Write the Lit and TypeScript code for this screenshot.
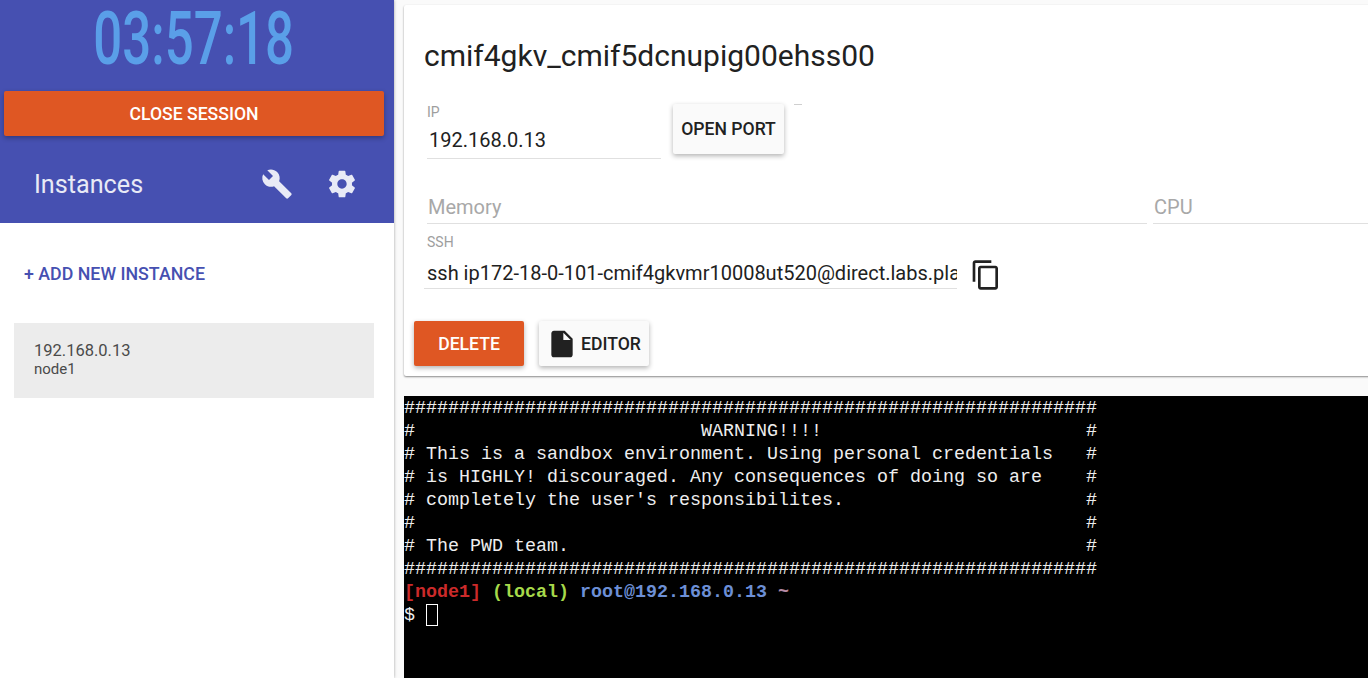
import { LitElement, html, css, svg } from "lit";
import { customElement } from "lit/decorators.js";

const ICONS = {
  build: "M22.7 19l-9.1-9.1c.9-2.3.4-5-1.5-6.9-2-2-5-2.4-7.4-1.3L9 6 6 9 1.6 4.7C.4 7.1.9 10.1 2.9 12.1c1.9 1.9 4.6 2.4 6.9 1.5l9.1 9.1c.4.4 1 .4 1.4 0l2.3-2.3c.5-.4.5-1.1.1-1.4z",
  gear: "M19.43 12.98c.04-.32.07-.64.07-.98s-.03-.66-.07-.98l2.11-1.65c.19-.15.24-.42.12-.64l-2-3.46c-.12-.22-.39-.3-.61-.22l-2.49 1c-.52-.4-1.08-.73-1.69-.98l-.38-2.65C14.46 2.18 14.25 2 14 2h-4c-.25 0-.46.18-.49.42l-.38 2.65c-.61.25-1.17.59-1.69.98l-2.49-1c-.23-.09-.49 0-.61.22l-2 3.46c-.13.22-.07.49.12.64l2.11 1.65c-.04.32-.07.65-.07.98s.03.66.07.98l-2.11 1.65c-.19.15-.24.42-.12.64l2 3.46c.12.22.39.3.61.22l2.49-1c.52.4 1.08.73 1.69.98l.38 2.65c.03.24.24.42.49.42h4c.25 0 .46-.18.49-.42l.38-2.65c.61-.25 1.17-.59 1.69-.98l2.49 1c.23.09.49 0 .61-.22l2-3.46c.12-.22.07-.49-.12-.64l-2.11-1.65zM12 15.5c-1.93 0-3.5-1.57-3.5-3.5s1.57-3.5 3.5-3.5 3.5 1.57 3.5 3.5-1.57 3.5-3.5 3.5z",
  copy: "M16 1H4c-1.1 0-2 .9-2 2v14h2V3h12V1zm3 4H8c-1.1 0-2 .9-2 2v14c0 1.1.9 2 2 2h11c1.1 0 2-.9 2-2V7c0-1.1-.9-2-2-2zm0 16H8V7h11v14z",
  file: "M6 2c-1.1 0-1.99.9-1.99 2L4 20c0 1.1.89 2 1.99 2H18c1.1 0 2-.9 2-2V8l-6-6H6zm7 7V3.5L18.5 9H13z",
};
const icon = (d: string) => html`<svg class="icon" viewBox="0 0 24 24" width="32" height="32">${svg`<path d=${d} fill="currentColor"></path>`}</svg>`;

const BAR = "#".repeat(63);
const pad = (s: string) => s.padEnd(62, " ") + "#";
const LINES = [
  BAR,
  pad("#" + " ".repeat(26) + "WARNING!!!!"),
  pad("# This is a sandbox environment. Using personal credentials"),
  pad("# is HIGHLY! discouraged. Any consequences of doing so are"),
  pad("# completely the user's responsibilites."),
  pad("#"),
  pad("# The PWD team."),
  BAR,
];

@customElement("app-root")
export class AppRoot extends LitElement {
  static styles = css`
    :host {
      display: flex;
      width: 1368px;
      height: 678px;
      overflow: hidden;
      background: #fafafa;
      font-family: Roboto, "Liberation Sans", sans-serif;
      color: #212121;
    }
    .icon { display: block; flex: none; }
    .sidebar {
      width: 394px;
      flex: none;
      background: #fff;
      box-shadow: 0 0 3px rgba(0, 0, 0, 0.35);
      z-index: 1;
    }
    .head {
      background: #4650b1;
      height: 223px;
      box-sizing: border-box;
      padding: 0 10px 0 4px;
      display: flex;
      flex-direction: column;
    }
    .clock {
      height: 91px;
      display: flex;
      justify-content: center;
      align-items: flex-start;
      color: #5a9fe8;
      font-size: 75px;
      font-weight: 500;
      line-height: 76px;
      white-space: nowrap;
    }
    .clock span { display: block; transform: scaleX(0.68); transform-origin: 50% 0; }
    .btn {
      display: flex;
      align-items: center;
      justify-content: center;
      box-sizing: border-box;
      border-radius: 2px;
      font-size: 17.6px;
      font-weight: 500;
      box-shadow: 0 2px 5px rgba(0, 0, 0, 0.3);
      flex: none;
    }
    .orange { background: #df5723; color: #fff; }
    .light { background: #fafafa; color: #212121; }
    .close { height: 45px; width: 380px; }
    .tools {
      display: flex;
      align-items: center;
      padding-left: 30px;
      margin-top: 26px;
      height: 44px;
      color: #e8eaf6;
    }
    .tools .title { flex: 1; font-size: 25.2px; }
    .tools .wrench { margin-right: 33px; }
    .tools .gearI { margin-right: 26px; }
    .add {
      color: #4650b1;
      font-size: 17.8px;
      font-weight: 500;
      padding: 41px 0 0 24px;
      height: 59px;
      line-height: 20px;
    }
    .inst {
      margin-left: 14px;
      width: 360px;
      height: 75px;
      box-sizing: border-box;
      background: #ececec;
      padding: 19px 20px 0;
      color: #4a4a4a;
    }
    .inst .ip { font-size: 16.5px; line-height: 18px; }
    .inst .nm { font-size: 15px; line-height: 18px; }

    .main {
      flex: 1;
      min-width: 0;
      display: flex;
      flex-direction: column;
      padding: 5px 0 0 10px;
    }
    .card {
      height: 371px;
      flex: none;
      width: 1100px;
      box-sizing: border-box;
      background: #fff;
      border-radius: 2px;
      box-shadow: 0 1px 2px rgba(0, 0, 0, 0.45);
      padding: 0 0 0 20px;
    }
    h1 {
      margin: 0;
      font-size: 30px;
      font-weight: 400;
      line-height: 34px;
      padding-top: 34px;
      box-sizing: border-box;
      height: 67px;
    }
    .row { display: flex; }
    .ipRow { height: 100px; padding-top: 32px; box-sizing: border-box; margin-left: 3px; }
    .field { box-sizing: border-box; border-bottom: 1px solid #e0e0e0; }
    .lab { font-size: 14px; line-height: 16px; color: #9e9e9e; }
    .val { font-size: 20px; line-height: 24px; white-space: nowrap; overflow: hidden; }
    .ipField { width: 234px; height: 55px; }
    .ipField .val { margin: 8px 0 0 2px; }
    .open { margin: 0 0 0 12px; width: 111px; height: 50px; }
    .dash { width: 8px; height: 1px; background: #cfcfcf; margin: 0 0 0 10px; }
    .resRow { margin-left: 3px; height: 52px; }
    .ph { font-size: 20px; color: #a8a8a8; line-height: 30px; padding: 20px 0 0 1px; }
    .mem { width: 720px; height: 52px; }
    .cpu { flex: 1; margin-left: 6px; height: 52px; }
    .sshRow { align-items: flex-start; height: 65px; }
    .ssh { width: 533px; height: 65px; padding: 10px 0 0 3px; }
    .ssh .val { margin-top: 11px; }
    .copy { margin: 35px 0 0 13px; }
    .acts { display: flex; margin: 32px 0 0 -10px; gap: 15px; }
    .del { width: 110px; height: 45px; }
    .edit { width: 110px; height: 45px; justify-content: flex-start; padding-left: 7px; gap: 3px; }

    .term {
      margin-top: 20px;
      padding-top: 1px;
      flex: 1;
      background: #000;
      color: #eee;
      font-family: "Liberation Mono", monospace;
      font-size: 18.33px;
      line-height: 23px;
      overflow: hidden;
    }
    .term div { height: 23px; white-space: pre; }
    .r { color: #cc2a2a; font-weight: 700; }
    .g { color: #a6d94a; font-weight: 700; }
    .b { color: #6c8fd6; font-weight: 700; }
    .p { color: #b58aa5; font-weight: 700; }
    .cur { display: inline-block; box-sizing: border-box; width: 12px; height: 22px; border: 1px solid #fff; vertical-align: top; }
  `;

  render() {
    return html`
      <aside class="sidebar">
        <div class="head">
          <div class="clock"><span>03:57:18</span></div>
          <div class="btn orange close">CLOSE SESSION</div>
          <div class="tools">
            <div class="title">Instances</div>
            <div class="wrench">${icon(ICONS.build)}</div>
            <div class="gearI">${icon(ICONS.gear)}</div>
          </div>
        </div>
        <div class="add">+ ADD NEW INSTANCE</div>
        <div class="inst"><div class="ip">192.168.0.13</div><div class="nm">node1</div></div>
      </aside>
      <main class="main">
        <section class="card">
          <h1>cmif4gkv_cmif5dcnupig00ehss00</h1>
          <div class="row ipRow">
            <div class="field ipField"><div class="lab">IP</div><div class="val">192.168.0.13</div></div>
            <div class="btn light open">OPEN PORT</div>
            <div class="dash"></div>
          </div>
          <div class="row resRow">
            <div class="field mem"><div class="ph">Memory</div></div>
            <div class="field cpu"><div class="ph">CPU</div></div>
          </div>
          <div class="row sshRow">
            <div class="field ssh"><div class="lab">SSH</div><div class="val">ssh ip172-18-0-101-cmif4gkvmr10008ut520@direct.labs.play-with-docker.com</div></div>
            <div class="copy">${icon(ICONS.copy)}</div>
          </div>
          <div class="acts">
            <div class="btn orange del">DELETE</div>
            <div class="btn light edit">${icon(ICONS.file)}<span>EDITOR</span></div>
          </div>
        </section>
        <section class="term">${LINES.map((l) => html`<div>${l}</div>`)}<div><span class="r">[node1]</span> <span class="g">(local)</span> <span class="b">root@192.168.0.13</span> <span class="p">~</span></div><div>$ <span class="cur"></span></div></section>
      </main>
    `;
  }
}
